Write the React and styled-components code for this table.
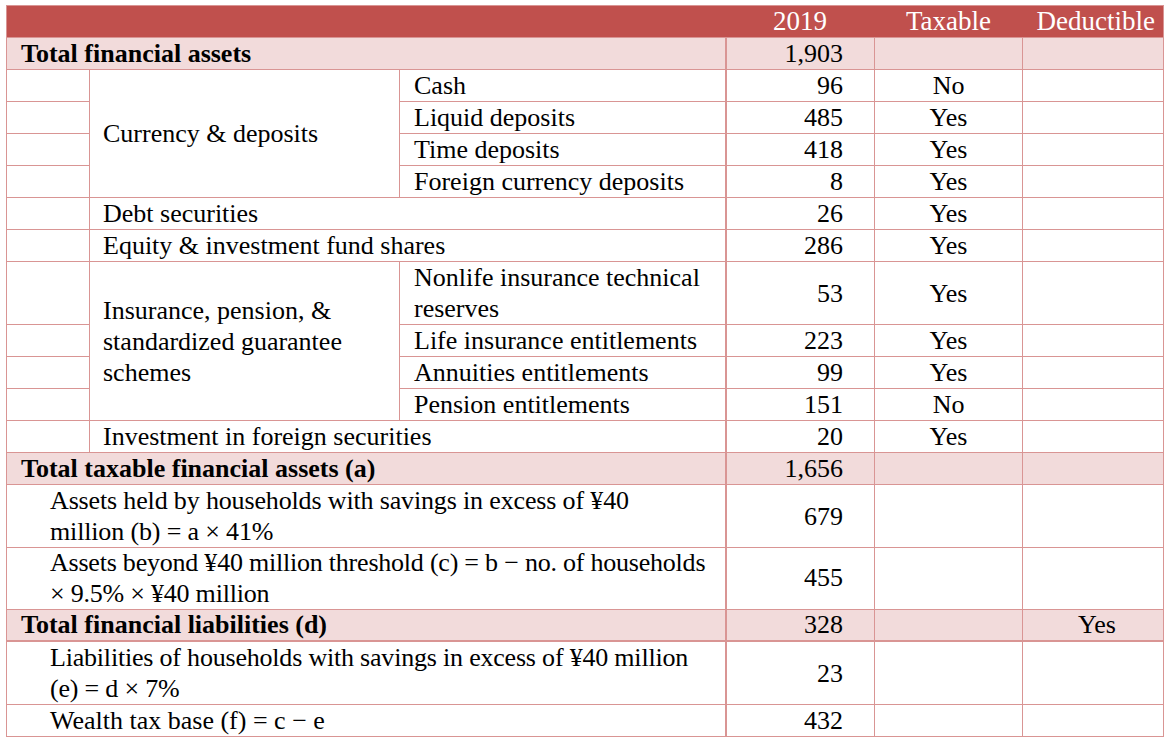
import React from "react";
import styled, { createGlobalStyle } from "styled-components";

const Global = createGlobalStyle`
  html, body { margin: 0; padding: 0; background: #fff; }
  body { padding: 5px 6px; font-family: "Liberation Serif", "Times New Roman", serif; color: #000; }
`;

const LINE = "#D99594";
const PINK = "#F2DBDB";
const RED = "#C0504D";

const Table = styled.table`
  border-collapse: collapse;
  table-layout: fixed;
  width: 1157px;
  font-family: "Liberation Serif", "Times New Roman", serif;
  font-size: 26px;
  line-height: 31px;
  color: #000;
  border: 1px solid ${LINE};
`;

const Col = styled.col`
  width: ${(p) => p.$w}px;
`;

const HeadRow = styled.tr`
  background: ${RED};
  color: #fff;
`;

const HeadCell = styled.th`
  font-family: "Liberation Serif", "Times New Roman", serif;
  font-weight: normal;
  font-size: 27px;
  padding: 0 0 0 ${(p) => p.$shift ?? 0}px;
  text-align: center;
  white-space: nowrap;
  border: none;
`;

const Row = styled.tr`
  background: ${(p) => (p.$total ? PINK : "#fff")};
  border-bottom: ${(p) => (p.$thick ? 2 : 1)}px solid ${LINE};
  line-height: ${(p) => p.$lh ?? 31}px;
`;

const Cell = styled.td`
  font-family: "Liberation Serif", "Times New Roman", serif;
  padding: 0;
  border: 1px solid ${LINE};
  vertical-align: middle;
`;

const LabelCell = styled(Cell)`
  padding-left: ${(p) => p.$indent ?? 13}px;
  padding-right: 4px;
  font-weight: ${(p) => (p.$bold ? "bold" : "normal")};
  letter-spacing: ${(p) => p.$ls ?? 0}px;
  white-space: nowrap;
`;

const NumCell = styled(Cell)`
  text-align: right;
  padding-right: 31px;
  border-left: 2px solid ${LINE};
`;

const FlagCell = styled(Cell)`
  text-align: center;
  padding-left: ${(p) => p.$shift ?? 0}px;
`;

const Blank = styled(Cell)``;

function DataRow({ label, value, tax = "", ded = "", total, thick, indent, bold, ls, lh }) {
  return (
    <Row $total={total} $thick={thick} $lh={lh}>
      <LabelCell colSpan={3} $indent={indent} $bold={bold} $ls={ls}>
        {label}
      </LabelCell>
      <NumCell>{value}</NumCell>
      <FlagCell>{tax}</FlagCell>
      <FlagCell $shift={8}>{ded}</FlagCell>
    </Row>
  );
}

function SubRow({ group, groupSpan, item, value, tax }) {
  return (
    <Row>
      <Blank />
      {group !== undefined && (
        <LabelCell rowSpan={groupSpan}>{group}</LabelCell>
      )}
      <LabelCell $indent={14}>{item}</LabelCell>
      <NumCell>{value}</NumCell>
      <FlagCell>{tax}</FlagCell>
      <FlagCell />
    </Row>
  );
}

function WideRow({ label, value, tax }) {
  return (
    <Row>
      <Blank />
      <LabelCell colSpan={2}>{label}</LabelCell>
      <NumCell>{value}</NumCell>
      <FlagCell>{tax}</FlagCell>
      <FlagCell />
    </Row>
  );
}

export default function App() {
  return (
    <>
      <Global />
      <Table>
        <colgroup>
          <Col $w={83} />
          <Col $w={310} />
          <Col $w={326} />
          <Col $w={149} />
          <Col $w={148} />
          <Col $w={141} />
        </colgroup>
        <tbody>
          <HeadRow>
            <HeadCell colSpan={3} />
            <HeadCell>2019</HeadCell>
            <HeadCell>Taxable</HeadCell>
            <HeadCell $shift={6}>Deductible</HeadCell>
          </HeadRow>
          <DataRow label="Total financial assets" value="1,903" total bold indent={14} />
          <SubRow group="Currency & deposits" groupSpan={4} item="Cash" value="96" tax="No" />
          <SubRow item="Liquid deposits" value="485" tax="Yes" />
          <SubRow item="Time deposits" value="418" tax="Yes" />
          <SubRow item="Foreign currency deposits" value="8" tax="Yes" />
          <WideRow label="Debt securities" value="26" tax="Yes" />
          <WideRow label="Equity & investment fund shares" value="286" tax="Yes" />
          <SubRow
            group={<>Insurance, pension, &amp;<br />standardized guarantee<br />schemes</>}
            groupSpan={4}
            item={<>Nonlife insurance technical<br />reserves</>}
            value="53"
            tax="Yes"
          />
          <SubRow item="Life insurance entitlements" value="223" tax="Yes" />
          <SubRow item="Annuities entitlements" value="99" tax="Yes" />
          <SubRow item="Pension entitlements" value="151" tax="No" />
          <WideRow label="Investment in foreign securities" value="20" tax="Yes" />
          <DataRow label="Total taxable financial assets (a)" value="1,656" total bold indent={14} />
          <DataRow
            label={<>Assets held by households with savings in excess of ¥40<br />million (b) = a × 41%</>}
            value="679"
            indent={43}
            ls={-0.15}
          />
          <DataRow
            label={<>Assets beyond ¥40 million threshold (c) = b − no. of households<br />× 9.5% × ¥40 million</>}
            value="455"
            indent={43}
            ls={-0.22}
            lh={30.5}
          />
          <DataRow
            label="Total financial liabilities (d)"
            value="328"
            ded="Yes"
            total
            bold
            indent={14}
            thick
            lh={30}
          />
          <DataRow
            label={<>Liabilities of households with savings in excess of ¥40 million<br />(e) = d × 7%</>}
            value="23"
            indent={43}
            ls={-0.2}
          />
          <DataRow label="Wealth tax base (f) = c − e" value="432" indent={43} />
        </tbody>
      </Table>
    </>
  );
}
